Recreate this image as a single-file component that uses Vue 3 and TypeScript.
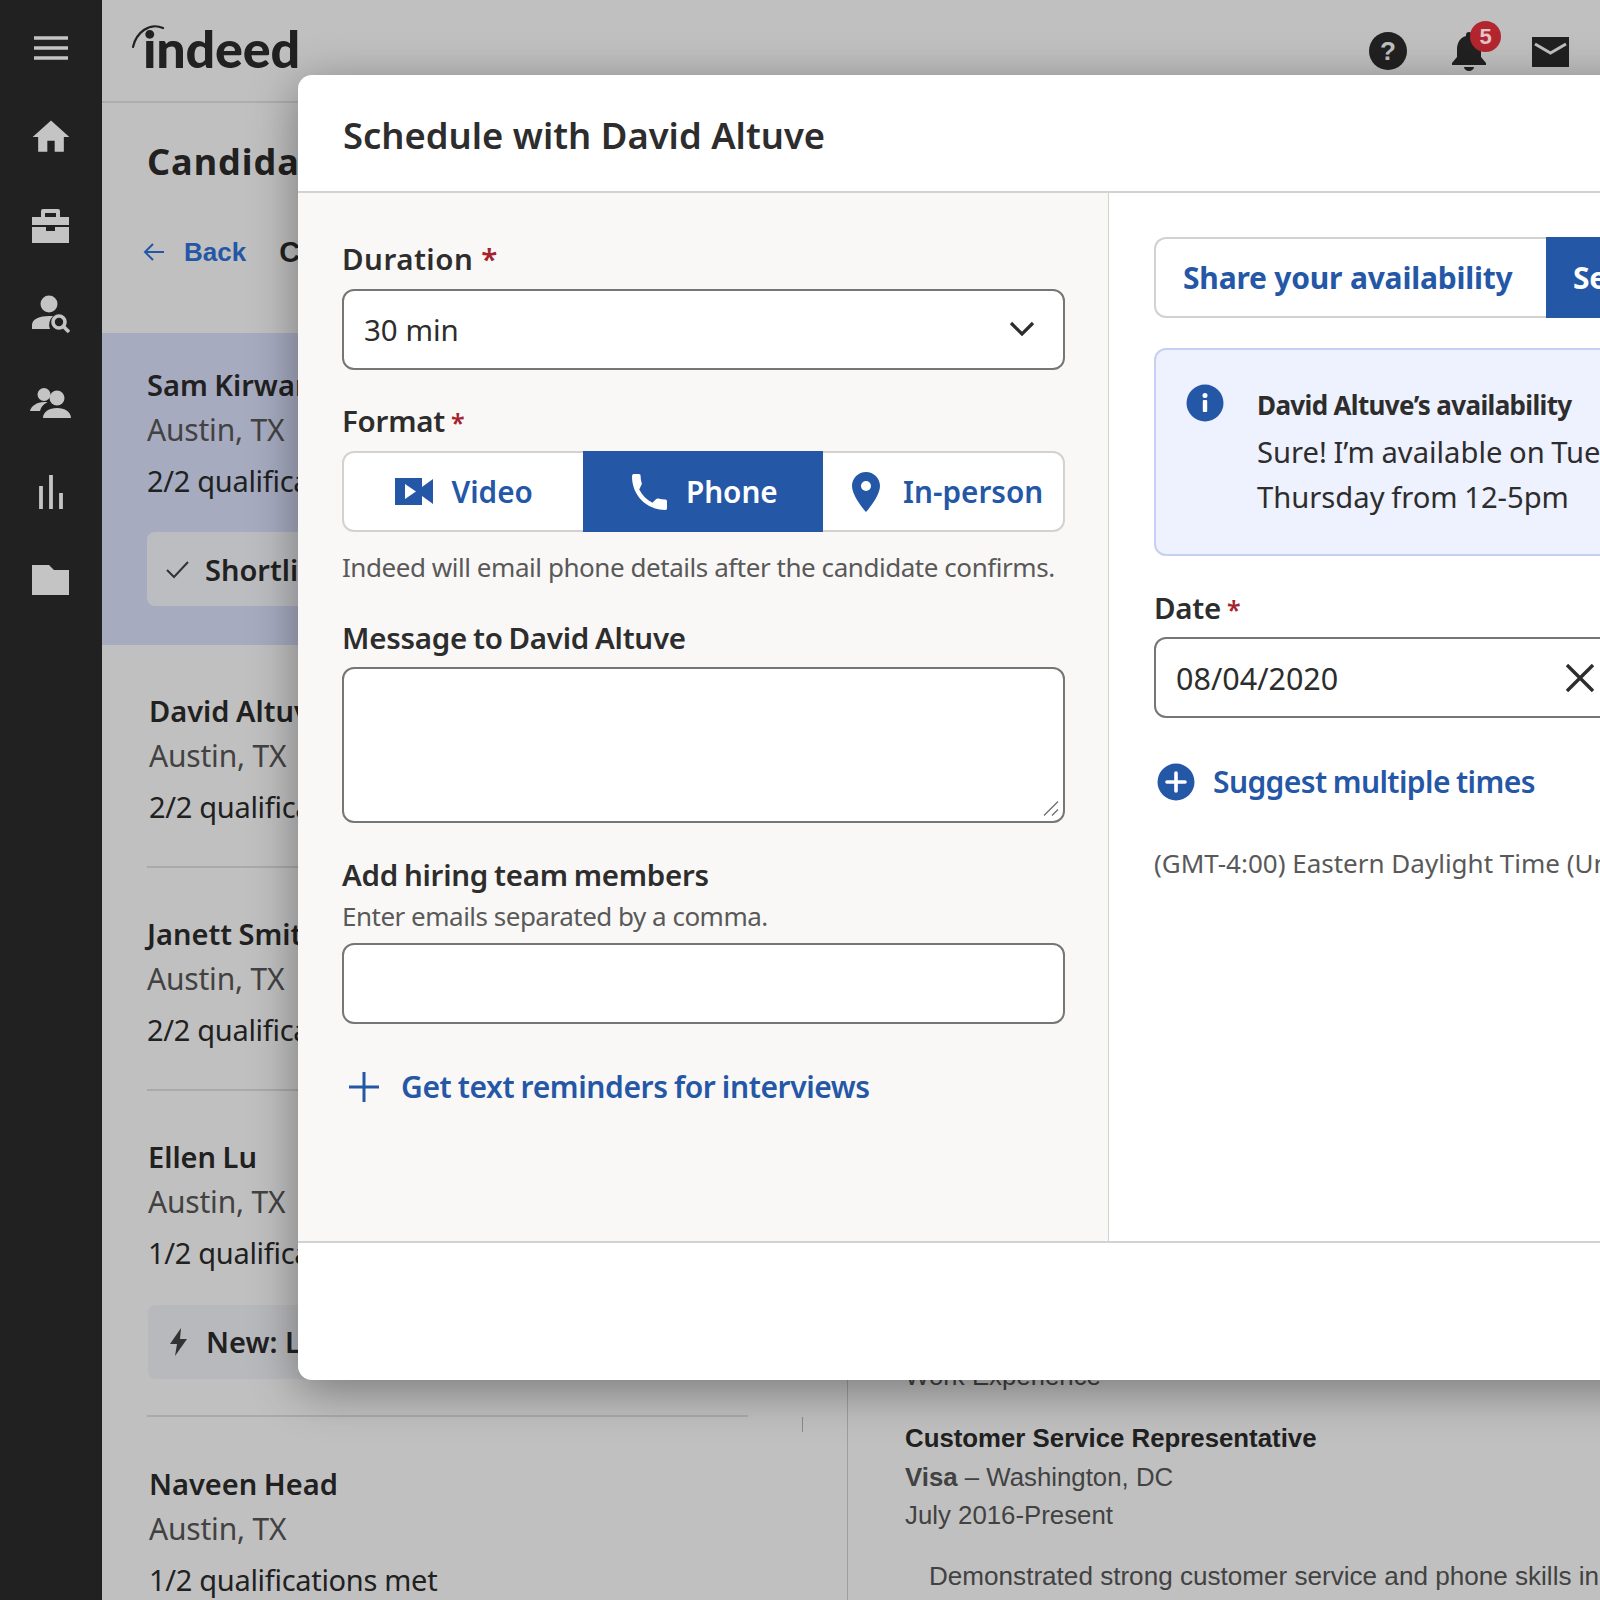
<script setup lang="ts">
interface Candidate {
  name: string
  place: string
  quals: string
  chip?: string
  chipIcon?: 'check' | 'bolt'
  active?: boolean
  indent?: number
}

const candidates: Candidate[] = [
  { name: 'Sam Kirwan', place: 'Austin, TX', quals: '2/2 qualifications met', chip: 'Shortlisted', chipIcon: 'check', active: true },
  { name: 'David Altuve', place: 'Austin, TX', quals: '2/2 qualifications met', indent: 2 },
  { name: 'Janett Smith', place: 'Austin, TX', quals: '2/2 qualifications met' },
  { name: 'Ellen Lu', place: 'Austin, TX', quals: '1/2 qualifications met', chip: 'New: Last active', chipIcon: 'bolt', indent: 1 },
  { name: 'Naveen Head', place: 'Austin, TX', quals: '1/2 qualifications met', indent: 2 }
]
</script>

<template>
  <div class="page">
    <nav class="rail">
      <div class="rail-item">
        <svg width="34" height="24" viewBox="0 0 34 24"><path d="M0 2h34M0 12h34M0 22h34" stroke="#c4c4c4" stroke-width="3.6" fill="none" /></svg>
      </div>
      <div class="rail-item">
        <svg width="44" height="44" viewBox="0 0 24 24"><path d="M10 20v-6h4v6h5v-8h3L12 3 2 12h3v8z" fill="#c4c4c4" /></svg>
      </div>
      <div class="rail-item">
        <svg width="37" height="34" viewBox="0 0 37 34"><path fill="#c4c4c4" fill-rule="evenodd" d="M9 8V2a2 2 0 0 1 2-2h15a2 2 0 0 1 2 2v6h9v8H0V8zm4-4v4h11V4zM0 18h14v4h9v-4h14v16H0z" /></svg>
      </div>
      <div class="rail-item">
        <svg width="38" height="38" viewBox="0 0 38 38"><circle cx="17" cy="9" r="8.5" fill="#c4c4c4" /><path fill="#c4c4c4" d="M0 34v-4c0-6 8-9 17-9 1.5 0 2.8.1 4 .3A11 11 0 0 0 18 34z" /><circle cx="27" cy="27" r="6" fill="none" stroke="#c4c4c4" stroke-width="3.6" /><path d="M31 31l6 6" stroke="#c4c4c4" stroke-width="3.6" /></svg>
      </div>
      <div class="rail-item">
        <svg width="42" height="30" viewBox="0 0 42 30"><circle cx="14" cy="6.500" r="6.500" fill="#c4c4c4" /><circle cx="27" cy="10" r="7.500" fill="#c4c4c4" /><path fill="#c4c4c4" d="M0 23c1-5 7-9 14-9 1.500 0 2.500.1 3.500.4-4 1.500-6.500 4-7.500 8.600zM13 30c0-6 6-10 14-10s14 4 14 10z" /></svg>
      </div>
      <div class="rail-item">
        <svg width="24" height="34" viewBox="0 0 24 34"><path d="M2 11v23M12 0v34M22 18v16" stroke="#c4c4c4" stroke-width="3.800" fill="none" /></svg>
      </div>
      <div class="rail-item">
        <svg width="37" height="30" viewBox="0 0 37 30"><path fill="#c4c4c4" d="M0 0h17l5 5h15v25H0z" /></svg>
      </div>
    </nav>

    <div class="main">
      <header class="topbar">
        <div class="logo">
          <svg class="logo-arc" width="34" height="28" viewBox="0 0 34 28"><path d="M1 25C4 11 17 0 31 6" fill="none" stroke="#212121" stroke-width="2.200" stroke-linecap="round" /></svg>
          <span class="logo-word">indeed</span>
        </div>
        <div class="top-icons">
          <span class="help">?</span>
          <span class="bell">
            <svg width="36" height="40" viewBox="0 0 36 40"><path fill="#212121" d="M18 1c-1.800 0-3 1.300-3 3v1C9 6.500 6 12 6 18v8l-5 6v2h34v-2l-5-6v-8c0-6-3-11.500-9-13V4c0-1.700-1.200-3-3-3zM13 36a5 4 0 0 0 10 0z" /></svg>
            <span class="badge">5</span>
          </span>
          <svg width="37" height="30" viewBox="0 0 37 30"><rect width="37" height="30" fill="#212121" /><path d="M3 7l15.500 9L34 7" fill="none" stroke="#c0c0c0" stroke-width="3" /></svg>
        </div>
      </header>

      <h1 class="page-title">Candidates</h1>
      <div class="crumbs">
        <svg width="22" height="20" viewBox="0 0 22 20"><path d="M21 10H2M10 2l-8 8 8 8" fill="none" stroke="#2557a7" stroke-width="2" /></svg>
        <span class="back">Back</span>
        <span class="crumb-job">Customer Service</span>
      </div>

      <div class="split">
        <section class="list">
          <article v-for="c in candidates" :key="c.name" class="cand" :class="{ active: c.active }">
            <div class="cand-inner" :class="{ 'has-chip': c.chip }" :style="{ paddingLeft: (c.indent ?? 0) + 'px' }">
              <div class="cand-name">{{ c.name }}</div>
              <div class="cand-place">{{ c.place }}</div>
              <div class="cand-quals">{{ c.quals }}</div>
              <div v-if="c.chip" class="chip" :class="{ muted: c.chipIcon === 'bolt' }">
                <svg v-if="c.chipIcon === 'check'" width="24" height="20" viewBox="0 0 24 20"><path d="M2 11l7 7L23 3" fill="none" stroke="#333" stroke-width="2" /></svg>
                <svg v-else width="22" height="28" viewBox="0 0 20 28"><path d="M12 0L1 16h7l-2 12 12-17h-7z" fill="#333" /></svg>
                <span>{{ c.chip }}</span>
              </div>
            </div>
          </article>
          <span class="scroll-tick"></span>
        </section>

        <section class="resume">
          <div class="res-muted">Work Experience</div>
          <div class="res-title">Customer Service Representative</div>
          <div class="res-line first-line"><b>Visa</b> – Washington, DC</div>
          <div class="res-line">July 2016-Present</div>
          <p class="res-para">Demonstrated strong customer service and phone skills in a fast-paced setting, exceptional ability to listen and communicate to other team members</p>
        </section>
      </div>
    </div>

    <div class="modal">
      <div class="modal-head">Schedule with David Altuve</div>
      <div class="modal-body">
        <div class="col-left">
          <div class="label first">Duration<em>*</em></div>
          <div class="field select">
            <span>30 min</span>
            <svg width="26" height="16" viewBox="0 0 26 16"><path d="M2 3l11 11L24 3" fill="none" stroke="#2d2d2d" stroke-width="3.200" /></svg>
          </div>

          <div class="label format">Format<em>*</em></div>
          <div class="segments">
            <div class="seg video">
              <svg width="38" height="27" viewBox="0 0 38 27"><path fill="#2557a7" fill-rule="evenodd" d="M0 0h27v9L38 1v25l-11-8v9H0zM10 6v15l11-7.500z" /></svg>
              <span>Video</span>
            </div>
            <div class="seg on">
              <svg width="36" height="36" viewBox="3 3 18 18"><path fill="#fff" d="M6.620 10.790c1.440 2.830 3.760 5.140 6.590 6.590l1.900-1.900c.27-.27.670-.36 1.020-.24 1.120.37 2.330.57 3.570.57.550 0 .8.450.8 1V20c0 .55-.25 1-.8 1C10.300 21 3 13.700 3 4.300c0-.55.25-1.300.8-1.300h2.700c.55 0 .8.450.8 1 0 1.250.2 2.450.57 3.570.11.350.03.740-.25 1.020z" /></svg>
              <span>Phone</span>
            </div>
            <div class="seg pin">
              <svg width="34" height="40" viewBox="5 2 14 20"><path fill="#2557a7" fill-rule="evenodd" d="M12 2C8.130 2 5 5.130 5 9c0 5.250 7 13 7 13s7-7.750 7-13c0-3.870-3.130-7-7-7zm0 9.500a2.500 2.500 0 1 1 0-5 2.500 2.500 0 0 1 0 5z" /></svg>
              <span>In-person</span>
            </div>
          </div>
          <div class="help-text">Indeed will email phone details after the candidate confirms.</div>

          <div class="label message">Message to David Altuve</div>
          <div class="area-wrap">
            <textarea class="field area"></textarea>
            <svg class="grip" width="16" height="15" viewBox="0 0 16 15"><path d="M1 14.500L15 .5M9 14.500l6-6" stroke="#6f6f6f" stroke-width="1.300" fill="none" /></svg>
          </div>

          <div class="label team">Add hiring team members</div>
          <div class="hint">Enter emails separated by a comma.</div>
          <input class="field plain" type="text" />

          <div class="link reminders">
            <svg width="32" height="32" viewBox="0 0 32 32"><path d="M16 1v30M1 16h30" stroke="#2557a7" stroke-width="3" fill="none" /></svg>
            <span>Get text reminders for interviews</span>
          </div>
        </div>

        <div class="col-right">
          <div class="toggle">
            <div class="tog">Share your availability</div>
            <div class="tog on">Set a time</div>
          </div>

          <div class="notice">
            <svg class="notice-icon" width="38" height="38" viewBox="0 0 38 38"><circle cx="19" cy="19" r="18.500" fill="#2557a7" /><circle cx="19" cy="11.500" r="2.500" fill="#fff" /><rect x="16.800" y="16" width="4.400" height="12" rx="1" fill="#fff" /></svg>
            <div class="notice-text">
              <div class="notice-title">David Altuve’s availability</div>
              <div class="notice-body">Sure! I’m available on Tuesday and<br />Thursday from 12-5pm</div>
            </div>
          </div>

          <div class="label date">Date<em>*</em></div>
          <div class="field date-field">
            <span>08/04/2020</span>
            <svg width="28" height="28" viewBox="0 0 28 28"><path d="M1 1l26 26M27 1L1 27" stroke="#2d2d2d" stroke-width="3.400" fill="none" /></svg>
          </div>

          <div class="link suggest">
            <svg width="38" height="38" viewBox="0 0 38 38"><circle cx="19" cy="19" r="18.500" fill="#2557a7" /><path d="M19 10v18M10 19h18" stroke="#fff" stroke-width="3.600" stroke-linecap="round" /></svg>
            <span>Suggest multiple times</span>
          </div>

          <div class="timezone">(GMT-4:00) Eastern Daylight Time (United States)</div>
        </div>
      </div>
      <div class="modal-foot"></div>
    </div>
  </div>
</template>

<style>
html,
body {
  margin: 0;
  background: #c0c0c0;
}
</style>

<style scoped>
.page {
  position: relative;
  display: flex;
  width: 1600px;
  height: 1600px;
  overflow: hidden;
  background: #c0c0c0;
  color: #212121;
  font-family: "Noto Sans", "Open Sans", sans-serif;
}

.rail {
  flex: 0 0 102px;
  box-sizing: border-box;
  display: flex;
  flex-direction: column;
  align-items: center;
  padding: 4px 1px 0 0;
  background: #212121;
}

.rail-item {
  display: flex;
  align-items: center;
  justify-content: center;
  height: 88.700px;
  flex: none;
}

.main {
  flex: 1;
  min-width: 0;
  display: flex;
  flex-direction: column;
}

.topbar {
  flex: none;
  display: flex;
  justify-content: space-between;
  height: 101px;
  padding: 0 31px 0 30px;
  border-bottom: 2px solid #adadad;
}

.logo {
  position: relative;
  padding-left: 11px;
  height: 100px;
}

.logo-arc {
  position: absolute;
  left: 0;
  top: 22px;
}

.logo-word {
  display: block;
  margin-top: 11px;
  font-family: Lato, sans-serif;
  font-size: 52px;
  font-weight: 900;
  line-height: 74px;
  letter-spacing: -0.200px;
}

.top-icons {
  display: flex;
  align-items: flex-start;
  gap: 44px;
  padding-top: 32px;
}

.help {
  width: 38px;
  height: 38px;
  border-radius: 50%;
  background: #212121;
  color: #c0c0c0;
  font: 700 26px/38px "Liberation Sans", sans-serif;
  text-align: center;
}

.bell {
  position: relative;
  display: block;
  margin-top: -1px;
  margin-right: 1px;
}

.badge {
  position: absolute;
  left: 19px;
  top: -10px;
  width: 31px;
  height: 31px;
  border-radius: 50%;
  background: #b3262f;
  color: #e3c5c7;
  font: 700 22px/31px "Liberation Sans", sans-serif;
  text-align: center;
}

.top-icons > svg {
  margin-top: 5px;
}

.page-title {
  margin: 37px 0 0 45px;
  font-size: 36px;
  font-weight: 700;
  line-height: 44px;
  letter-spacing: 1px;
  white-space: nowrap;
}

.crumbs {
  display: flex;
  align-items: center;
  gap: 19px;
  margin: 52px 0 0 41px;
  height: 32px;
}

.back {
  font: 700 26px/32px "Liberation Sans", sans-serif;
  color: #2557a7;
}

.crumb-job {
  margin-left: 14px;
  font: 700 29px/32px "Liberation Sans", sans-serif;
  white-space: nowrap;
}

.split {
  flex: 1;
  display: flex;
  margin-top: 65px;
  min-height: 0;
}

.list {
  position: relative;
  flex: 0 0 745px;
  border-right: 1px solid #9d9d9d;
}

.cand {
  padding: 0 99px 0 45px;
}

.cand.active {
  background: #a6abc0;
  height: 312px;
  box-sizing: border-box;
}

.cand-inner {
  padding-top: 48px;
  padding-bottom: 41px;
  border-bottom: 2px solid #aaa;
}

.cand:nth-child(2) .cand-inner {
  padding-top: 47.500px;
}

.cand:nth-child(5) .cand-inner {
  padding-top: 49px;
}

.cand-inner.has-chip {
  padding-bottom: 36px;
}

.cand.active .cand-inner {
  padding-top: 34px;
  border-bottom: 0;
}

.cand-name {
  font-size: 29px;
  font-weight: 600;
  line-height: 36px;
  word-spacing: -1px;
  white-space: nowrap;
}

.cand-place {
  margin-top: 9px;
  font-size: 30px;
  line-height: 36px;
  letter-spacing: -0.200px;
  color: #424242;
}

.cand-quals {
  margin-top: 15px;
  font-size: 29px;
  line-height: 36px;
  letter-spacing: -0.300px;
  white-space: nowrap;
}

.chip {
  display: flex;
  align-items: center;
  gap: 16px;
  height: 74px;
  margin-top: 33px;
  padding-left: 18px;
  border-radius: 8px;
  background: #bcbdc0;
  font-size: 29px;
  font-weight: 600;
  white-space: nowrap;
}

.chip.muted {
  gap: 16px;
  margin-top: 34px;
  padding-left: 20px;
  background: #b8b9bc;
}

.scroll-tick {
  position: absolute;
  left: 700px;
  top: 1084px;
  height: 15px;
  border-left: 1px solid #8a8a8a;
}

.resume {
  flex: 1;
  min-width: 0;
  padding: 1024px 0 0 57px;
  font-family: "Liberation Sans", sans-serif;
  font-size: 25.800px;
  line-height: 38px;
  color: #424242;
}

.res-title {
  margin-top: 24px;
  font-weight: 700;
  color: #212121;
}

.res-line b {
  color: #424242;
}

.first-line {
  margin-top: 1px;
}

.res-para {
  width: 900px;
  margin: 23px 0 0 24px;
  font-size: 26.100px;
}

.modal {
  position: absolute;
  left: 298px;
  top: 75px;
  width: 1400px;
  height: 1305px;
  display: flex;
  flex-direction: column;
  border-radius: 14px;
  background: #fff;
  box-shadow: 0 10px 48px rgba(0, 0, 0, 0.38);
}

.modal-head {
  flex: none;
  height: 118px;
  box-sizing: border-box;
  padding-left: 45px;
  border-bottom: 2px solid #d4d2d0;
  font-size: 36.400px;
  font-weight: 600;
  line-height: 120px;
  color: #2d2d2d;
}

.modal-body {
  flex: 1;
  display: flex;
  min-height: 0;
}

.col-left {
  flex: 0 0 811px;
  box-sizing: border-box;
  padding: 0 43px 0 44px;
  background: #f9f8f6;
  border-right: 1px solid #d4d2d0;
}

.col-right {
  flex: 1;
  padding: 44px 0 0 45px;
}

.modal-foot {
  flex: none;
  height: 139px;
  box-sizing: border-box;
  border-top: 2px solid #d4d2d0;
}

.label {
  font-size: 29.500px;
  font-weight: 600;
  line-height: 36px;
  letter-spacing: -0.250px;
  word-spacing: -1.500px;
  color: #2d2d2d;
}

.label em {
  margin-left: 6px;
  font-size: 25px;
  color: #a4232d;
  font-style: normal;
}

.label.first {
  margin-top: 48px;
  margin-bottom: 12px;
  letter-spacing: 0.500px;
}

.label.first em {
  margin-left: 8px;
  font-size: 29.500px;
}

.label.format {
  margin-top: 33px;
  margin-bottom: 11px;
}

.label.message {
  margin-top: 36px;
  margin-bottom: 11px;
}

.label.team {
  margin-top: 34px;
}

.label.date {
  margin-top: 34px;
  margin-bottom: 10px;
}

.field {
  box-sizing: border-box;
  display: flex;
  align-items: center;
  justify-content: space-between;
  width: 100%;
  margin: 0;
  padding: 0 20px;
  border: 2px solid #767676;
  border-radius: 12px;
  background: #fff;
  font-family: inherit;
  font-size: 29.500px;
  color: #2d2d2d;
}

.select {
  height: 81px;
  padding-right: 28px;
}

.select svg {
  margin-top: -4px;
}

.area-wrap {
  position: relative;
}

.area {
  display: block;
  height: 156px;
  resize: none;
}

.grip {
  position: absolute;
  right: 6px;
  bottom: 7px;
}

.plain {
  display: block;
  height: 81px;
}

.segments {
  display: flex;
  box-sizing: border-box;
  height: 81px;
  border: 2px solid #d4d2d0;
  border-radius: 12px;
  background: #fff;
}

.seg {
  flex: 0 0 239.300px;
  box-sizing: border-box;
  display: flex;
  align-items: center;
  justify-content: center;
  gap: 18px;
  font-size: 29.700px;
  font-weight: 600;
  color: #2557a7;
}

.seg.video {
  padding-left: 1px;
}

.seg.pin {
  flex: 1;
  gap: 20px;
  padding-left: 6px;
}

.seg.on {
  flex-basis: 240px;
  margin: -2px 0;
  padding-left: 3px;
  background: #2557a7;
  color: #fff;
}

.help-text {
  margin-top: 18px;
  font-size: 26px;
  line-height: 34px;
  letter-spacing: -0.450px;
  white-space: nowrap;
  color: #595959;
}

.hint {
  margin-top: 6px;
  margin-bottom: 10px;
  font-size: 26px;
  line-height: 34px;
  letter-spacing: -0.500px;
  color: #595959;
}

.link {
  display: flex;
  align-items: center;
  font-size: 30px;
  font-weight: 600;
  letter-spacing: -0.400px;
  word-spacing: -1px;
  color: #2557a7;
}

.reminders {
  gap: 21px;
  margin-top: 42px;
  padding-left: 6px;
}

.suggest {
  gap: 18px;
  margin-top: 43px;
  padding-left: 3px;
  letter-spacing: -0.600px;
}

.toggle {
  display: flex;
  height: 81px;
}

.tog {
  box-sizing: border-box;
  width: 392px;
  border: 2px solid #d4d2d0;
  border-right: 0;
  border-radius: 12px 0 0 12px;
  padding-left: 27px;
  font-size: 30px;
  font-weight: 700;
  line-height: 77px;
  letter-spacing: -0.200px;
  white-space: nowrap;
  color: #2557a7;
}

.tog.on {
  width: 300px;
  border: 0;
  border-radius: 0;
  background: #2557a7;
  color: #fff;
  line-height: 81px;
}

.notice {
  display: flex;
  gap: 33px;
  box-sizing: border-box;
  width: 560px;
  height: 208px;
  margin-top: 30px;
  padding: 37px 0 0 30px;
  border: 2px solid #c6d0f0;
  border-radius: 12px;
  background: #eef1fe;
}

.notice-icon {
  flex: none;
  margin-top: -3px;
}

.notice-title {
  margin-top: 1px;
  font-size: 26px;
  font-weight: 700;
  line-height: 34px;
  letter-spacing: -0.650px;
  white-space: nowrap;
  color: #2d2d2d;
}

.notice-body {
  margin-top: 8px;
  font-size: 29.200px;
  line-height: 45px;
  word-spacing: -1px;
  white-space: nowrap;
  color: #2d2d2d;
}

.date-field {
  width: 473px;
  height: 81px;
  padding-right: 31px;
  font-size: 30.500px;
}

.timezone {
  margin-top: 44px;
  font-size: 26px;
  line-height: 34px;
  white-space: nowrap;
  color: #595959;
}
</style>
